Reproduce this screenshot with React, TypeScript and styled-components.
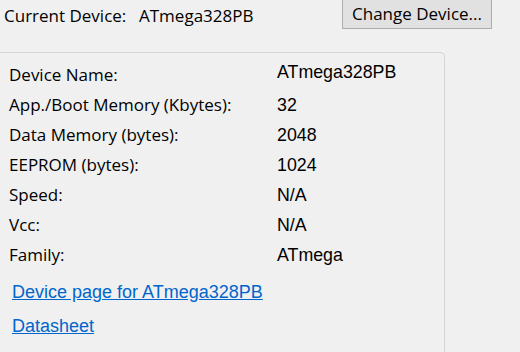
import React from "react";
import styled, { createGlobalStyle } from "styled-components";

const Global = createGlobalStyle`
  html, body { margin: 0; padding: 0; background: #f0f0f0; }
  body { width: 520px; height: 352px; overflow: hidden; }
`;

const Page = styled.div`
  width: 520px;
  height: 352px;
  background: #f0f0f0;
  display: flex;
  flex-direction: column;
  overflow: hidden;
  color: #000;
`;

const Header = styled.div`
  display: flex;
  align-items: flex-start;
  height: 52px;
  padding-left: 4px;
  padding-right: 28px;
`;

const UiText = styled.span`
  font-family: "Open Sans", "Noto Sans", sans-serif;
  font-size: 17px;
  line-height: 22px;
`;

const CurrentLabel = styled(UiText)`
  margin-top: 5px;
  width: 135px;
`;

const CurrentValue = styled(UiText)`
  margin-top: 5px;
  flex: 1;
`;

const Button = styled.button`
  margin-top: -1px;
  width: 150px;
  height: 30px;
  background: #e1e1e1;
  border: 1px solid #adadad;
  font-family: "Open Sans", "Noto Sans", sans-serif;
  font-size: 17px;
  line-height: 22px;
  color: #000;
  padding: 0;
`;

const Group = styled.div`
  margin-left: -1px;
  width: 446px;
  flex: 1;
  border: 1px solid #d5d5d5;
  border-bottom: none;
  border-radius: 0 5px 0 0;
  padding: 7px 0 0 9px;
  box-sizing: border-box;
`;

const Grid = styled.div`
  display: grid;
  grid-template-columns: 268px 1fr;
  grid-auto-rows: 30px;
  align-items: center;
`;

const Label = styled(UiText)``;

const Value = styled.span<{ $raised?: boolean }>`
  font-family: "Liberation Sans", Arial, sans-serif;
  font-size: 17.8px;
  line-height: 22px;
  position: relative;
  top: ${(p) => (p.$raised ? "-3px" : "0")};
`;

const Links = styled.div`
  display: flex;
  flex-direction: column;
  gap: 12px;
  padding-left: 3px;
  margin-top: 11px;
`;

const Link = styled.a`
  font-family: "Liberation Sans", Arial, sans-serif;
  font-size: 18px;
  line-height: 22px;
  color: #0066cc;
  text-decoration: underline;
  width: fit-content;
`;

const rows: [string, string][] = [
  ["Device Name:", "ATmega328PB"],
  ["App./Boot Memory (Kbytes):", "32"],
  ["Data Memory (bytes):", "2048"],
  ["EEPROM (bytes):", "1024"],
  ["Speed:", "N/A"],
  ["Vcc:", "N/A"],
  ["Family:", "ATmega"],
];

export default function App() {
  return (
    <Page>
      <Global />
      <Header>
        <CurrentLabel>Current Device:</CurrentLabel>
        <CurrentValue>ATmega328PB</CurrentValue>
        <Button>Change Device...</Button>
      </Header>
      <Group>
        <Grid>
          {rows.map(([l, v], i) => (
            <React.Fragment key={l}>
              <Label>{l}</Label>
              <Value $raised={i === 0}>{v}</Value>
            </React.Fragment>
          ))}
        </Grid>
        <Links>
          <Link href="#">Device page for ATmega328PB</Link>
          <Link href="#">Datasheet</Link>
        </Links>
      </Group>
    </Page>
  );
}
